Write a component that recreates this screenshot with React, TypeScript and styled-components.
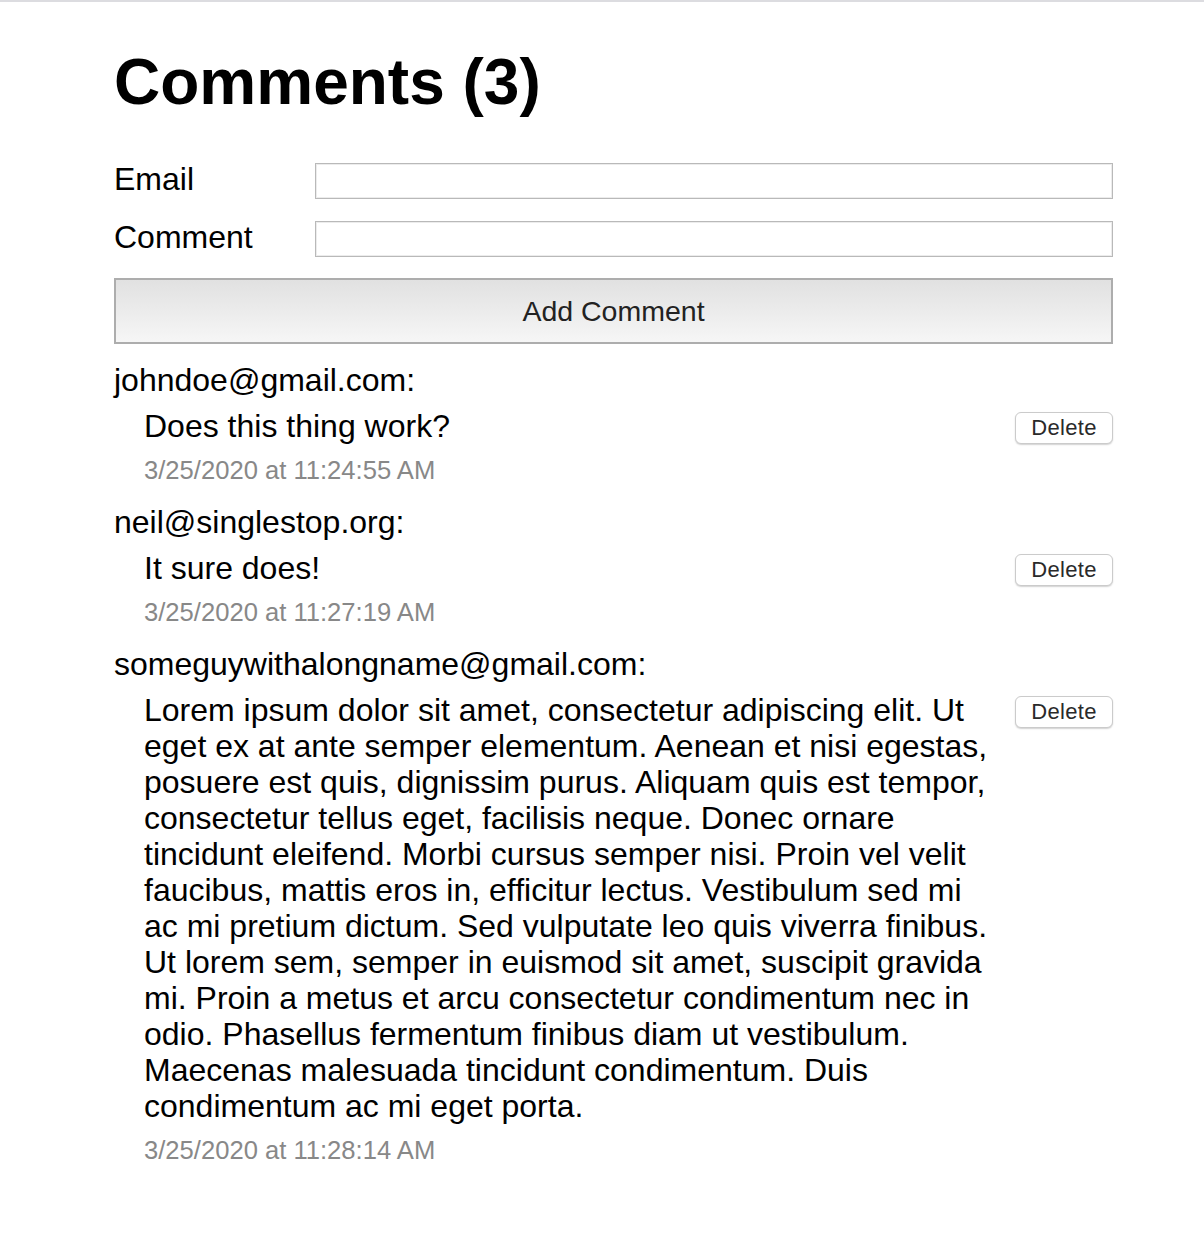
import React from "react";
import styled, { createGlobalStyle } from "styled-components";

const GlobalStyle = createGlobalStyle`
  html, body {
    margin: 0;
    padding: 0;
    background: #ffffff;
  }
  body {
    border-top: 2px solid #dcdce0;
    font-family: "Liberation Sans", Arial, Helvetica, sans-serif;
    color: #000;
  }
`;

const Page = styled.main`
  width: 999px;
  margin-left: 114px;
  padding-bottom: 60px;
`;

const Title = styled.h1`
  margin: 43px 0 44px;
  font-size: 64px;
  line-height: 74px;
  font-weight: 700;
`;

const Form = styled.form`
  display: grid;
  grid-template-columns: 201px 1fr;
  row-gap: 22px;
  align-items: start;
`;

const Label = styled.label`
  font-size: 32px;
  line-height: 32px;
`;

const Input = styled.input`
  box-sizing: border-box;
  height: 36px;
  width: 100%;
  margin: 0;
  border: 1px solid #b9b9b9;
  box-shadow: inset 0 0 0 1px #ececec;
  background: #fff;
  font-size: 24px;
  font-family: inherit;
  outline: none;
`;

const SubmitButton = styled.button`
  grid-column: 1 / -1;
  box-sizing: border-box;
  height: 66px;
  width: 100%;
  margin: -1px 0 0;
  border: 2px solid #adadad;
  background: linear-gradient(#e1e1e1, #f6f6f6);
  color: #222;
  font-family: inherit;
  font-size: 28.5px;
  cursor: pointer;
`;

const List = styled.ul`
  list-style: none;
  margin: 18px 0 0;
  padding: 0;
`;

const Item = styled.li`
  margin-bottom: 19px;
`;

const Author = styled.div`
  font-size: 32px;
  line-height: 36px;
`;

const Body = styled.div`
  display: flex;
  align-items: flex-start;
  margin-top: 10px;
  padding-left: 30px;
`;

const Text = styled.p`
  flex: 1;
  margin: 0;
  font-size: 32px;
  line-height: 36px;
`;

const DeleteButton = styled.button`
  flex-shrink: 0;
  box-sizing: border-box;
  width: 98px;
  height: 32px;
  margin: 4px 0 0 20px;
  padding: 0;
  border: 1px solid #cbcbcb;
  border-radius: 6px;
  background: #fff;
  box-shadow: 0 1px 1.5px rgba(0, 0, 0, 0.18);
  color: #2a2a2a;
  font-family: inherit;
  font-size: 22px;
  letter-spacing: 0.3px;
  cursor: pointer;
`;

const Stamp = styled.div`
  margin-top: 11px;
  padding-left: 30px;
  font-size: 25.6px;
  line-height: 30px;
  color: #888888;
`;

type CommentData = { email: string; text: string; date: string };

const comments: CommentData[] = [
  {
    email: "johndoe@gmail.com",
    text: "Does this thing work?",
    date: "3/25/2020 at 11:24:55 AM",
  },
  {
    email: "neil@singlestop.org",
    text: "It sure does!",
    date: "3/25/2020 at 11:27:19 AM",
  },
  {
    email: "someguywithalongname@gmail.com",
    text:
      "Lorem ipsum dolor sit amet, consectetur adipiscing elit. Ut eget ex at ante semper elementum. Aenean et nisi egestas, posuere est quis, dignissim purus. Aliquam quis est tempor, consectetur tellus eget, facilisis neque. Donec ornare tincidunt eleifend. Morbi cursus semper nisi. Proin vel velit faucibus, mattis eros in, efficitur lectus. Vestibulum sed mi ac mi pretium dictum. Sed vulputate leo quis viverra finibus. Ut lorem sem, semper in euismod sit amet, suscipit gravida mi. Proin a metus et arcu consectetur condimentum nec in odio. Phasellus fermentum finibus diam ut vestibulum. Maecenas malesuada tincidunt condimentum. Duis condimentum ac mi eget porta.",
    date: "3/25/2020 at 11:28:14 AM",
  },
];

export default function App() {
  return (
    <>
      <GlobalStyle />
      <Page>
        <Title>Comments ({comments.length})</Title>
        <Form onSubmit={(e) => e.preventDefault()}>
          <Label htmlFor="email">Email</Label>
          <Input id="email" type="text" />
          <Label htmlFor="comment">Comment</Label>
          <Input id="comment" type="text" />
          <SubmitButton type="submit">Add Comment</SubmitButton>
        </Form>
        <List>
          {comments.map((c) => (
            <Item key={c.date}>
              <Author>{c.email}:</Author>
              <Body>
                <Text>{c.text}</Text>
                <DeleteButton type="button">Delete</DeleteButton>
              </Body>
              <Stamp>{c.date}</Stamp>
            </Item>
          ))}
        </List>
      </Page>
    </>
  );
}
